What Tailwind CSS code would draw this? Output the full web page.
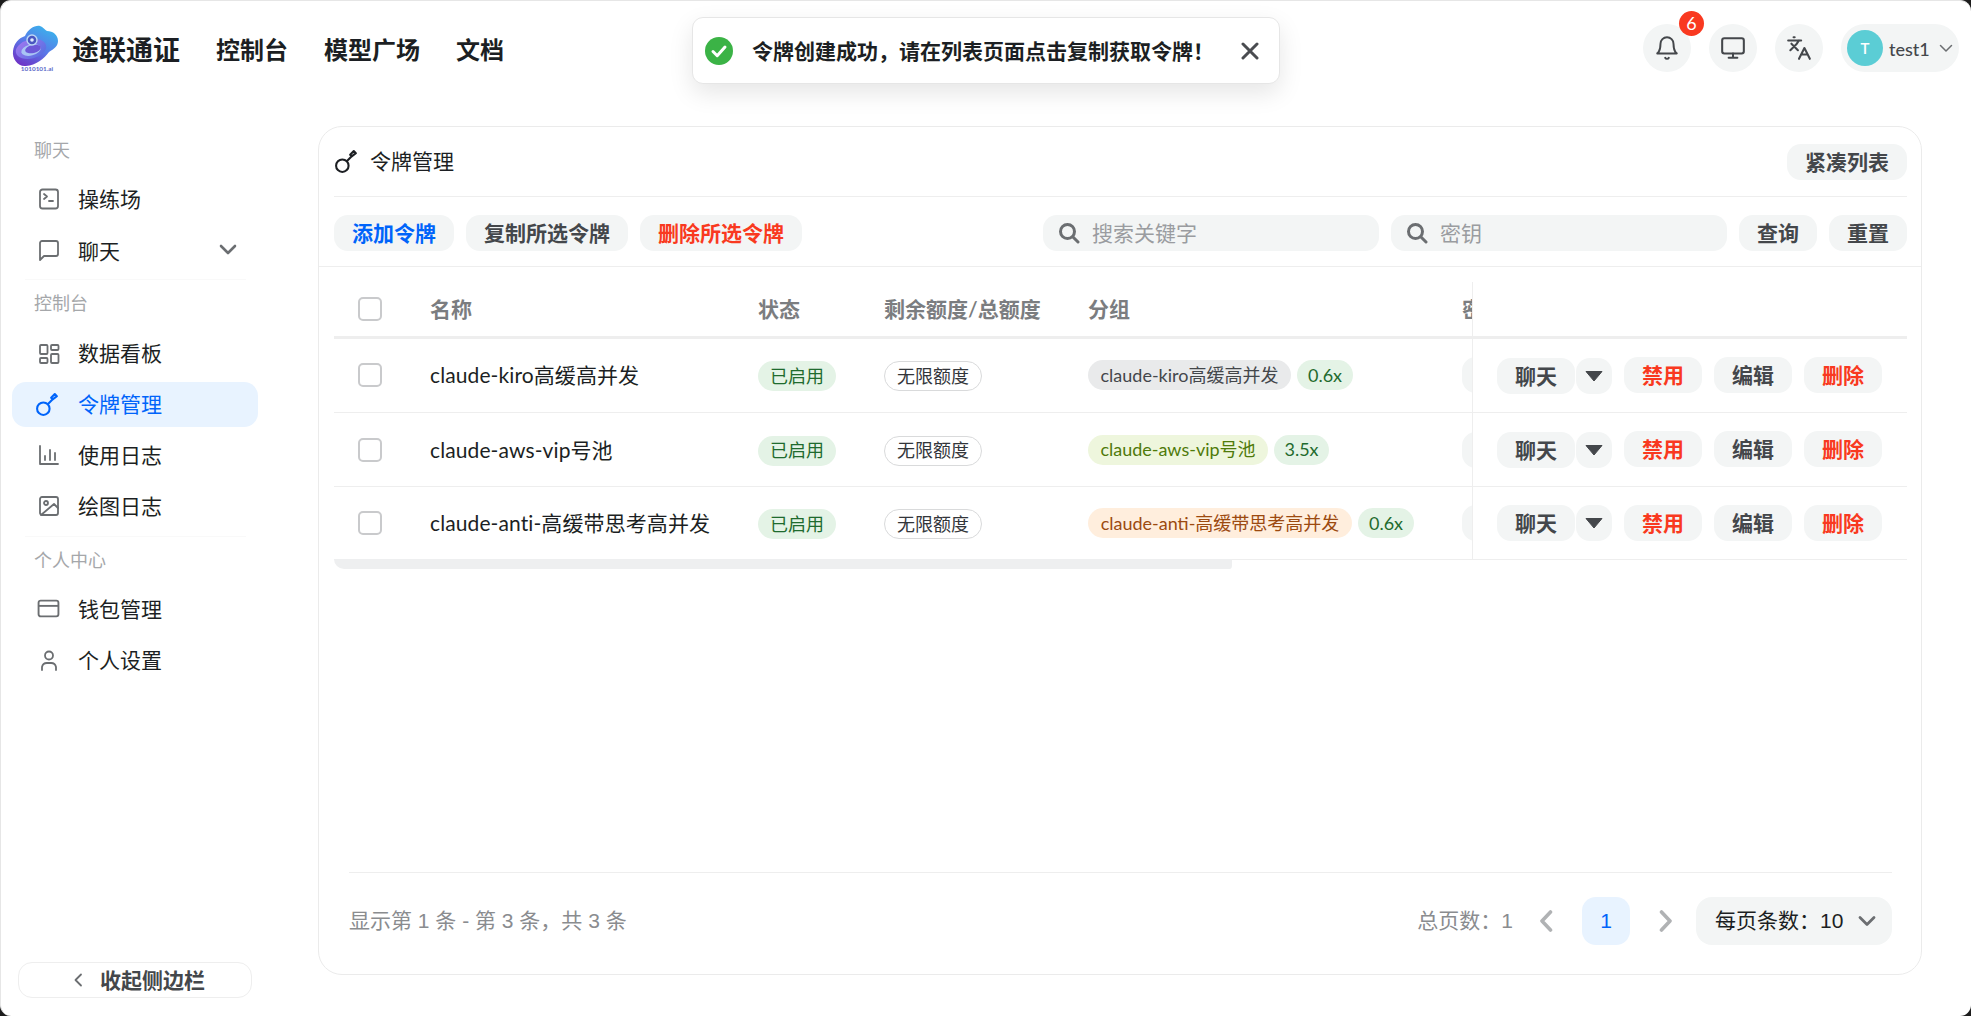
<!DOCTYPE html>
<html lang="zh-CN">
<head>
<meta charset="utf-8">
<title>令牌管理</title>
<script src="https://cdn.jsdelivr.net/npm/@tailwindcss/browser@4"></script>
</head>
<body class="bg-[#1c1c1c] overflow-hidden">
<div class="relative flex h-[1016px] w-[1971px] flex-col overflow-hidden rounded-[11px] border-t border-l border-[#e6e6e6] bg-white text-[21px] text-[#1c1f23] [font-family:Lato,'Noto_Sans_CJK_SC',sans-serif]">

  <!-- toast -->
  <div class="absolute left-[691px] top-[16px] z-10 flex h-[67px] w-[588px] items-center rounded-[11px] border border-[#e6e6e6] bg-white pl-[12px] shadow-[0_9px_24px_rgba(0,0,0,0.10)]">
    <svg class="h-[28px] w-[28px]" viewBox="0 0 28 28"><circle cx="14" cy="14" r="14" fill="#3bb346"/><path d="M8 14.5l4.2 4.2L20 10" fill="none" stroke="#fff" stroke-width="3" stroke-linecap="round" stroke-linejoin="round"/></svg>
    <span class="ml-[19px] w-[489px] whitespace-nowrap text-[21px] font-semibold leading-[30px] text-[#1c1f23]">令牌创建成功&#xFF0C;请在列表页面点击复制获取令牌&#xFF01;</span>
    <svg class="h-[18px] w-[18px]" viewBox="0 0 18 18"><path d="M2 2l14 14M16 2L2 16" stroke="#4a4c50" stroke-width="3" stroke-linecap="round"/></svg>
  </div>

  <!-- header -->
  <header class="flex h-[94px] shrink-0 items-center pl-[11px] pr-[12px]">
    <svg class="h-[46px] w-[46px] shrink-0" viewBox="0 0 46 46">
      <defs>
        <linearGradient id="lg" x1="0.75" y1="0" x2="0.15" y2="1"><stop offset="0" stop-color="#39b4ec"/><stop offset="0.5" stop-color="#5a78e8"/><stop offset="1" stop-color="#6f2fc4"/></linearGradient>
        <linearGradient id="lr" x1="0" y1="0" x2="1" y2="1"><stop offset="0" stop-color="#a678f0"/><stop offset="1" stop-color="#4f6fe0"/></linearGradient>
      </defs>
      <path d="M1 26C2 18 7 13 13 11C16 4 23 0 28 1C31 2 33 5 35 6C41 6 46 10 46 16C46 21 42 24 37 27C32 34 24 40 14 41C6 42 0 34 1 26Z" fill="url(#lg)"/>
      <ellipse cx="19" cy="24" rx="15.5" ry="9.5" transform="rotate(-14 19 24)" fill="url(#lr)"/>
      <ellipse cx="19" cy="25" rx="10" ry="5.5" transform="rotate(-14 19 25)" fill="#a9c4f4"/>
      <ellipse cx="21" cy="24" rx="8" ry="4" transform="rotate(-14 21 24)" fill="#6d58d8"/>
      <circle cx="20" cy="15" r="5" fill="#4a56c0" stroke="#bcd7f6" stroke-width="1.4"/>
      <circle cx="20" cy="15" r="1.8" fill="#e0ebfc"/>
      <text x="25" y="45.5" text-anchor="middle" font-size="6.4" font-weight="700" fill="#5a68c8" font-family="Lato">1010101.ai</text>
    </svg>
    <span class="ml-[14px] mt-[4px] w-[108px] whitespace-nowrap text-[27px] font-bold leading-[36px]">途联通证</span>
    <nav class="ml-[36px] mt-[4px] flex gap-[36px] whitespace-nowrap text-[24px] font-semibold leading-[32px]">
      <span>控制台</span><span>模型广场</span><span>文档</span>
    </nav>
    <div class="ml-auto flex items-center gap-[18px]">
      <div class="relative flex h-[48px] w-[48px] items-center justify-center rounded-full bg-[#f3f5f5]">
        <svg class="h-[26px] w-[26px]" viewBox="0 0 24 24" fill="none" stroke="#44474b" stroke-width="1.8" stroke-linecap="round" stroke-linejoin="round"><path d="M6 8a6 6 0 0 1 12 0c0 7 3 9 3 9H3s3-2 3-9"/><path d="M10.3 21a1.9 1.9 0 0 0 3.4 0"/></svg>
        <span class="absolute left-[36px] top-[-13px] flex h-[25px] w-[25px] items-center justify-center rounded-full bg-[#f93920] text-[18px] leading-[25px] text-white">6</span>
      </div>
      <div class="flex h-[48px] w-[48px] items-center justify-center rounded-full bg-[#f3f5f5]">
        <svg class="h-[26px] w-[26px]" viewBox="0 0 24 24" fill="none" stroke="#44474b" stroke-width="1.9" stroke-linecap="round" stroke-linejoin="round"><rect x="2" y="3" width="20" height="14" rx="2"/><path d="M8 21h8M12 17v4"/></svg>
      </div>
      <div class="flex h-[48px] w-[48px] items-center justify-center rounded-full bg-[#f3f5f5]">
        <svg class="h-[26px] w-[26px]" viewBox="0 0 24 24" fill="none" stroke="#44474b" stroke-width="1.9" stroke-linecap="round" stroke-linejoin="round"><path d="M5 8l6 6M4 14l6-6 2-3M2 5h12M7 2h1"/><path d="M22 22l-5-10-5 10M14 18h6"/></svg>
      </div>
      <div class="flex h-[48px] w-[118px] items-center rounded-full bg-[#f3f5f5] pl-[6px]">
        <span class="flex h-[36px] w-[36px] items-center justify-center rounded-full bg-[#5bcdd5] text-[15px] font-semibold text-white">T</span>
        <span class="ml-[6px] mt-[2px] text-[18px] font-medium leading-[24px] text-[#44474b]">test1</span>
        <svg class="ml-[9px] h-[14px] w-[14px]" viewBox="0 0 14 14" fill="none" stroke="#6b6e71" stroke-width="1.5" stroke-linecap="round" stroke-linejoin="round"><path d="M1.5 4.5L7 10l5.5-5.5"/></svg>
      </div>
    </div>
  </header>

  <div class="flex min-h-0 flex-1">
    <!-- sidebar -->
    <aside class="flex w-[269px] shrink-0 flex-col pt-[30px] pb-[18px] text-[21px] leading-[30px]">
      <div class="h-[51px] pl-[33px] pt-[12px] text-[18px] leading-[27px] text-[#a5a7aa]">聊天</div>
      <div class="ml-[11px] mr-[12px] mb-[6px] flex h-[45px] items-center pl-[26px]">
        <svg class="h-[22px] w-[22px]" viewBox="0 0 22 22" fill="none" stroke="#6b6e71" stroke-width="1.8" stroke-linecap="round" stroke-linejoin="round"><rect x="2" y="1.5" width="18" height="19" rx="2.5"/><path d="M6 6l3 2.5L6 11M11 13h4"/></svg>
        <span class="ml-[18px]">操练场</span>
      </div>
      <div class="ml-[11px] mr-[12px] mb-[6px] flex h-[45px] items-center pl-[26px]">
        <svg class="h-[22px] w-[22px]" viewBox="0 0 22 22" fill="none" stroke="#6b6e71" stroke-width="1.8" stroke-linecap="round" stroke-linejoin="round"><path d="M20 15a2 2 0 0 1-2 2H6l-4 4V4a2 2 0 0 1 2-2h14a2 2 0 0 1 2 2z"/></svg>
        <span class="ml-[18px] mt-[3px]">聊天</span>
        <svg class="ml-auto mr-[21px] h-[14px] w-[18px]" viewBox="0 0 18 14" fill="none" stroke="#6b6e71" stroke-width="2.6" stroke-linecap="round" stroke-linejoin="round"><path d="M2 3l7 7 7-7"/></svg>
      </div>
      <div class="mx-[24px] h-[2px] border-b border-[#f9f9f9]"></div>

      <div class="h-[51px] pl-[33px] pt-[10px] text-[18px] leading-[27px] text-[#a5a7aa]">控制台</div>
      <div class="ml-[11px] mr-[12px] mb-[6px] flex h-[45px] items-center pl-[26px]">
        <svg class="h-[22px] w-[22px]" viewBox="0 0 22 22" fill="none" stroke="#6b6e71" stroke-width="1.8" stroke-linejoin="round"><rect x="2" y="2" width="7.5" height="9" rx="1"/><rect x="13" y="2" width="7.5" height="5" rx="1"/><rect x="13" y="11" width="7.5" height="9" rx="1"/><rect x="2" y="15" width="7.5" height="5" rx="1"/></svg>
        <span class="ml-[18px] -mt-[1px]">数据看板</span>
      </div>
      <div class="ml-[11px] mr-[12px] mb-[6px] flex h-[45px] items-center rounded-[14px] bg-[#e8f3ff] pl-[23px] text-[#0064fa]">
        <svg class="h-[25px] w-[25px]" viewBox="0 0 24 24" fill="none" stroke="#0064fa" stroke-width="2" stroke-linecap="round" stroke-linejoin="round"><circle cx="8" cy="16" r="6"/><path d="M12.5 11.5L17 7l-1.5-1.5L19 2l2 2-4 3"/></svg>
        <span class="ml-[18px] -mt-[1px]">令牌管理</span>
      </div>
      <div class="ml-[11px] mr-[12px] mb-[6px] flex h-[45px] items-center pl-[26px]">
        <svg class="h-[22px] w-[22px] -mt-[1px]" viewBox="0 0 22 22" fill="none" stroke="#6b6e71" stroke-width="1.8" stroke-linecap="round" stroke-linejoin="round"><path d="M2 2v18h18M7 12v4M12 6v10M17 9v7"/></svg>
        <span class="ml-[18px] -mt-[2px]">使用日志</span>
      </div>
      <div class="ml-[11px] mr-[12px] mb-[6px] flex h-[45px] items-center pl-[26px]">
        <svg class="h-[22px] w-[22px] -mt-[1px]" viewBox="0 0 22 22" fill="none" stroke="#6b6e71" stroke-width="1.8" stroke-linecap="round" stroke-linejoin="round"><rect x="2" y="2" width="18" height="18" rx="2"/><circle cx="8" cy="8" r="2"/><path d="M20 13l-4-4L3 20"/></svg>
        <span class="ml-[18px] -mt-[2px]">绘图日志</span>
      </div>
      <div class="mx-[24px] h-[2px] border-b border-[#f9f9f9]"></div>

      <div class="h-[49px] pl-[33px] pt-[10px] text-[18px] leading-[27px] text-[#a5a7aa]">个人中心</div>
      <div class="ml-[11px] mr-[12px] mb-[6px] flex h-[45px] items-center pl-[25px]">
        <svg class="h-[23px] w-[23px]" viewBox="0 0 22 22" fill="none" stroke="#6b6e71" stroke-width="1.8" stroke-linejoin="round"><rect x="1.5" y="3.5" width="19" height="15" rx="2"/><path d="M1.5 8.5h19"/></svg>
        <span class="ml-[18px]">钱包管理</span>
      </div>
      <div class="ml-[11px] mr-[12px] mb-[6px] flex h-[45px] items-center pl-[26px]">
        <svg class="h-[22px] w-[22px]" viewBox="0 0 22 22" fill="none" stroke="#6b6e71" stroke-width="1.8" stroke-linecap="round" stroke-linejoin="round"><circle cx="11" cy="6.5" r="4"/><path d="M4 21v-3a5 5 0 0 1 5-4h4a5 5 0 0 1 5 4v3"/></svg>
        <span class="ml-[18px]">个人设置</span>
      </div>

      <div class="ml-[17px] mt-auto flex h-[36px] w-[234px] items-center rounded-[14px] border border-[#eeeeee] bg-white pl-[54px] text-[21px] font-semibold leading-[30px] text-[#44474b]">
        <svg class="h-[14px] w-[10px]" viewBox="0 0 10 14" fill="none" stroke="#6b6e71" stroke-width="1.8" stroke-linecap="round" stroke-linejoin="round"><path d="M8 1.5L2.5 7 8 12.5"/></svg>
        <span class="ml-[17px]">收起侧边栏</span>
      </div>
    </aside>

    <!-- main -->
    <main class="flex min-w-0 flex-1 pl-[48px] pr-[49px] pt-[31px] pb-[41px]">
      <div class="flex w-[1604px] flex-col rounded-[24px] border border-[#ebebeb] bg-white">
        <div class="ml-[15px] mr-[14px] flex h-[70px] shrink-0 items-center border-b border-[#eeeeee]">
          <svg class="h-[25px] w-[25px]" viewBox="0 0 24 24" fill="none" stroke="#1c1f23" stroke-width="2" stroke-linecap="round" stroke-linejoin="round"><circle cx="8" cy="16" r="6"/><path d="M12.5 11.5L17 7l-1.5-1.5L19 2l2 2-4 3"/></svg>
          <span class="ml-[11px] -mt-[2px] leading-[30px]">令牌管理</span>
          <button class="ml-auto h-[36px] rounded-[14px] bg-[#f3f5f5] px-[18px] text-[21px] font-semibold leading-[30px] text-[#44474b]">紧凑列表</button>
        </div>

        <div class="flex h-[70px] shrink-0 items-center gap-[12px] border-b border-[#eeeeee] pl-[15px] pr-[14px] pt-[3px] text-[21px] font-semibold leading-[30px]">
          <button class="h-[36px] rounded-[14px] bg-[#f3f5f5] px-[18px] font-semibold text-[#0064fa]">添加令牌</button>
          <button class="h-[36px] rounded-[14px] bg-[#f3f5f5] px-[18px] font-semibold text-[#44474b]">复制所选令牌</button>
          <button class="h-[36px] rounded-[14px] bg-[#f3f5f5] px-[18px] font-semibold text-[#f93920]">删除所选令牌</button>
          <div class="ml-auto flex h-[36px] w-[336px] items-center rounded-[14px] bg-[#f3f5f5] pl-[15px] font-normal text-[#9a9ca0]">
            <svg class="h-[22px] w-[22px]" viewBox="0 0 22 22" fill="none" stroke="#6b6e71" stroke-width="3" stroke-linecap="round"><circle cx="9.5" cy="9.5" r="7"/><path d="M15 15l5 5"/></svg>
            <span class="ml-[12px]">搜索关键字</span>
          </div>
          <div class="flex h-[36px] w-[336px] items-center rounded-[14px] bg-[#f3f5f5] pl-[15px] font-normal text-[#9a9ca0]">
            <svg class="h-[22px] w-[22px]" viewBox="0 0 22 22" fill="none" stroke="#6b6e71" stroke-width="3" stroke-linecap="round"><circle cx="9.5" cy="9.5" r="7"/><path d="M15 15l5 5"/></svg>
            <span class="ml-[12px]">密钥</span>
          </div>
          <button class="h-[36px] rounded-[14px] bg-[#f3f5f5] px-[18px] font-semibold text-[#44474b]">查询</button>
          <button class="h-[36px] rounded-[14px] bg-[#f3f5f5] px-[18px] font-semibold text-[#44474b]">重置</button>
        </div>

        <!-- table -->
        <div class="ml-[15px] mt-[15px] w-[1573px]">
          <!-- head -->
          <div class="flex h-[57px] border-b-[3px] border-[#eeeeee]">
            <div class="grid h-[54px] w-[1138px] shrink-0 grid-cols-[96px_328px_126px_204px_374px_10px] items-center overflow-hidden text-[21px] font-semibold leading-[30px] text-[#7b7d80]">
              <div class="pl-[24px]"><div class="h-[24px] w-[24px] rounded-[5px] border-2 border-[#c9cacc] bg-white"></div></div>
              <div>名称</div><div>状态</div><div class="whitespace-nowrap">剩余额度/总额度</div><div>分组</div>
              <div class="overflow-hidden whitespace-nowrap">密钥</div>
            </div>
            <div class="h-[54px] flex-1 border-l border-[#eeeeee]"></div>
          </div>

          <!-- row 1 -->
          <div class="flex h-[74px] border-b border-[#eeeeee]">
            <div class="grid w-[1138px] shrink-0 grid-cols-[96px_328px_126px_204px_374px_10px] items-center overflow-hidden pb-[1px]">
              <div class="pl-[24px]"><div class="h-[24px] w-[24px] rounded-[5px] border-2 border-[#c9cacc] bg-white"></div></div>
              <div class="whitespace-nowrap leading-[30px] tracking-[0.1px]">claude-kiro高缓高并发</div>
              <div><span class="inline-flex h-[30px] w-[78px] items-center justify-center rounded-full bg-[#e4f3e6] text-[18px] text-[#1f6b2e]">已启用</span></div>
              <div><span class="inline-flex h-[30px] w-[98px] items-center justify-center rounded-full border border-[#d9dadb] bg-white text-[18px] text-[#33363a]">无限额度</span></div>
              <div class="flex gap-[6px] whitespace-nowrap text-[18px]">
                <span class="inline-flex h-[30px] w-[203px] items-center justify-center rounded-full bg-[#e9eaeb] text-[#44474b]">claude-kiro高缓高并发</span>
                <span class="inline-flex h-[30px] w-[56px] items-center justify-center rounded-full bg-[#e4f3e6] text-[#1f6b2e]">0.6x</span>
              </div>
              <div class="overflow-hidden"><div class="h-[36px] w-[40px] rounded-[14px] bg-[#f3f5f5]"></div></div>
            </div>
            <div class="flex flex-1 items-center gap-[12px] border-l border-[#eeeeee] pb-[1px] pl-[24px] text-[21px] font-semibold leading-[30px] text-[#44474b]">
              <div class="mt-[2px] flex gap-[1px]">
                <button class="h-[36px] w-[78px] rounded-[14px] bg-[#f3f5f5] font-semibold">聊天</button>
                <button class="flex h-[36px] w-[36px] items-center justify-center rounded-[14px] bg-[#f3f5f5]"><svg class="h-[12px] w-[18px]" viewBox="0 0 18 12"><path d="M1 1.5h16L9 11z" fill="#44474b" stroke="#44474b" stroke-linejoin="round"/></svg></button>
              </div>
              <button class="h-[36px] w-[78px] rounded-[14px] bg-[#f3f5f5] font-semibold text-[#f93920]">禁用</button>
              <button class="h-[36px] w-[78px] rounded-[14px] bg-[#f3f5f5] font-semibold">编辑</button>
              <button class="h-[36px] w-[78px] rounded-[14px] bg-[#f3f5f5] font-semibold text-[#f93920]">删除</button>
            </div>
          </div>

          <!-- row 2 -->
          <div class="flex h-[74px] border-b border-[#eeeeee]">
            <div class="grid w-[1138px] shrink-0 grid-cols-[96px_328px_126px_204px_374px_10px] items-center overflow-hidden">
              <div class="pl-[24px]"><div class="h-[24px] w-[24px] rounded-[5px] border-2 border-[#c9cacc] bg-white"></div></div>
              <div class="whitespace-nowrap leading-[30px] tracking-[0.1px]">claude-aws-vip号池</div>
              <div><span class="inline-flex h-[30px] w-[78px] items-center justify-center rounded-full bg-[#e4f3e6] text-[18px] text-[#1f6b2e]">已启用</span></div>
              <div><span class="inline-flex h-[30px] w-[98px] items-center justify-center rounded-full border border-[#d9dadb] bg-white text-[18px] text-[#33363a]">无限额度</span></div>
              <div class="flex gap-[6px] whitespace-nowrap text-[18px]">
                <span class="inline-flex h-[30px] w-[180px] items-center justify-center rounded-full bg-[#eef6dd] text-[#4f7a0a]">claude-aws-vip号池</span>
                <span class="inline-flex h-[30px] w-[55px] items-center justify-center rounded-full bg-[#e4f3e6] text-[#1f6b2e]">3.5x</span>
              </div>
              <div class="overflow-hidden"><div class="h-[36px] w-[40px] rounded-[14px] bg-[#f3f5f5]"></div></div>
            </div>
            <div class="flex flex-1 items-center gap-[12px] border-l border-[#eeeeee] pb-[1px] pl-[24px] text-[21px] font-semibold leading-[30px] text-[#44474b]">
              <div class="mt-[2px] flex gap-[1px]">
                <button class="h-[36px] w-[78px] rounded-[14px] bg-[#f3f5f5] font-semibold">聊天</button>
                <button class="flex h-[36px] w-[36px] items-center justify-center rounded-[14px] bg-[#f3f5f5]"><svg class="h-[12px] w-[18px]" viewBox="0 0 18 12"><path d="M1 1.5h16L9 11z" fill="#44474b" stroke="#44474b" stroke-linejoin="round"/></svg></button>
              </div>
              <button class="h-[36px] w-[78px] rounded-[14px] bg-[#f3f5f5] font-semibold text-[#f93920]">禁用</button>
              <button class="h-[36px] w-[78px] rounded-[14px] bg-[#f3f5f5] font-semibold">编辑</button>
              <button class="h-[36px] w-[78px] rounded-[14px] bg-[#f3f5f5] font-semibold text-[#f93920]">删除</button>
            </div>
          </div>

          <!-- row 3 -->
          <div class="flex h-[73px] border-b border-[#eeeeee]">
            <div class="grid w-[1138px] shrink-0 grid-cols-[96px_328px_126px_204px_374px_10px] items-center overflow-hidden">
              <div class="pl-[24px]"><div class="h-[24px] w-[24px] rounded-[5px] border-2 border-[#c9cacc] bg-white"></div></div>
              <div class="whitespace-nowrap leading-[30px] tracking-[0.1px]">claude-anti-高缓带思考高并发</div>
              <div><span class="inline-flex h-[30px] w-[78px] items-center justify-center rounded-full bg-[#e4f3e6] text-[18px] text-[#1f6b2e]">已启用</span></div>
              <div><span class="inline-flex h-[30px] w-[98px] items-center justify-center rounded-full border border-[#d9dadb] bg-white text-[18px] text-[#33363a]">无限额度</span></div>
              <div class="flex gap-[6px] whitespace-nowrap text-[18px]">
                <span class="inline-flex h-[30px] w-[264px] items-center justify-center rounded-full bg-[#ffeedd] text-[#9c4a10]">claude-anti-高缓带思考高并发</span>
                <span class="inline-flex h-[30px] w-[56px] items-center justify-center rounded-full bg-[#e4f3e6] text-[#1f6b2e]">0.6x</span>
              </div>
              <div class="overflow-hidden"><div class="h-[36px] w-[40px] rounded-[14px] bg-[#f3f5f5]"></div></div>
            </div>
            <div class="flex flex-1 items-center gap-[12px] border-l border-[#eeeeee] pl-[24px] text-[21px] font-semibold leading-[30px] text-[#44474b]">
              <div class="flex gap-[1px]">
                <button class="h-[36px] w-[78px] rounded-[14px] bg-[#f3f5f5] font-semibold">聊天</button>
                <button class="flex h-[36px] w-[36px] items-center justify-center rounded-[14px] bg-[#f3f5f5]"><svg class="h-[12px] w-[18px]" viewBox="0 0 18 12"><path d="M1 1.5h16L9 11z" fill="#44474b" stroke="#44474b" stroke-linejoin="round"/></svg></button>
              </div>
              <button class="h-[36px] w-[78px] rounded-[14px] bg-[#f3f5f5] font-semibold text-[#f93920]">禁用</button>
              <button class="h-[36px] w-[78px] rounded-[14px] bg-[#f3f5f5] font-semibold">编辑</button>
              <button class="h-[36px] w-[78px] rounded-[14px] bg-[#f3f5f5] font-semibold text-[#f93920]">删除</button>
            </div>
          </div>
          <div class="-mt-px h-[10px] w-[898px] rounded-bl-[12px] rounded-br-[4px] bg-[#eeeff0]"></div>
        </div>

        <!-- footer -->
        <div class="ml-[30px] mr-[29px] mt-auto flex h-[102px] items-start border-t border-[#eeeeee] pt-[24px] [font-family:'Liberation_Sans','Noto_Sans_CJK_SC',sans-serif]">
          <span class="flex h-[48px] items-center whitespace-nowrap text-[21px] leading-[30px] text-[#8a8c8f]">显示第 1 条 - 第 3 条&#xFF0C;共 3 条</span>
          <div class="ml-auto flex items-center">
            <span class="whitespace-nowrap text-[21px] leading-[30px] text-[#8a8c8f]">总页数&#xFF1A;1</span>
            <svg class="ml-[26px] h-[24px] w-[14px]" viewBox="0 0 14 24" fill="none" stroke="#b0b2b4" stroke-width="3.6" stroke-linecap="round" stroke-linejoin="round"><path d="M11.5 3L3 12l8.5 9"/></svg>
            <span class="ml-[29px] flex h-[48px] w-[48px] items-center justify-center rounded-[14px] bg-[#e8f3ff] text-[21px] font-medium text-[#0064fa]">1</span>
            <svg class="ml-[29px] h-[24px] w-[14px]" viewBox="0 0 14 24" fill="none" stroke="#b0b2b4" stroke-width="3.6" stroke-linecap="round" stroke-linejoin="round"><path d="M2.5 3L11 12l-8.5 9"/></svg>
            <div class="ml-[23px] flex h-[48px] w-[196px] items-center rounded-[16px] bg-[#f3f5f5] pl-[19px] text-[21px] leading-[30px]">
              <span class="whitespace-nowrap">每页条数&#xFF1A;10</span>
              <svg class="ml-[15px] h-[14px] w-[18px]" viewBox="0 0 18 14" fill="none" stroke="#6b6e71" stroke-width="2.8" stroke-linecap="round" stroke-linejoin="round"><path d="M2 3.5l7 7 7-7"/></svg>
            </div>
          </div>
        </div>
      </div>
    </main>
  </div>
</div>
</body>
</html>
